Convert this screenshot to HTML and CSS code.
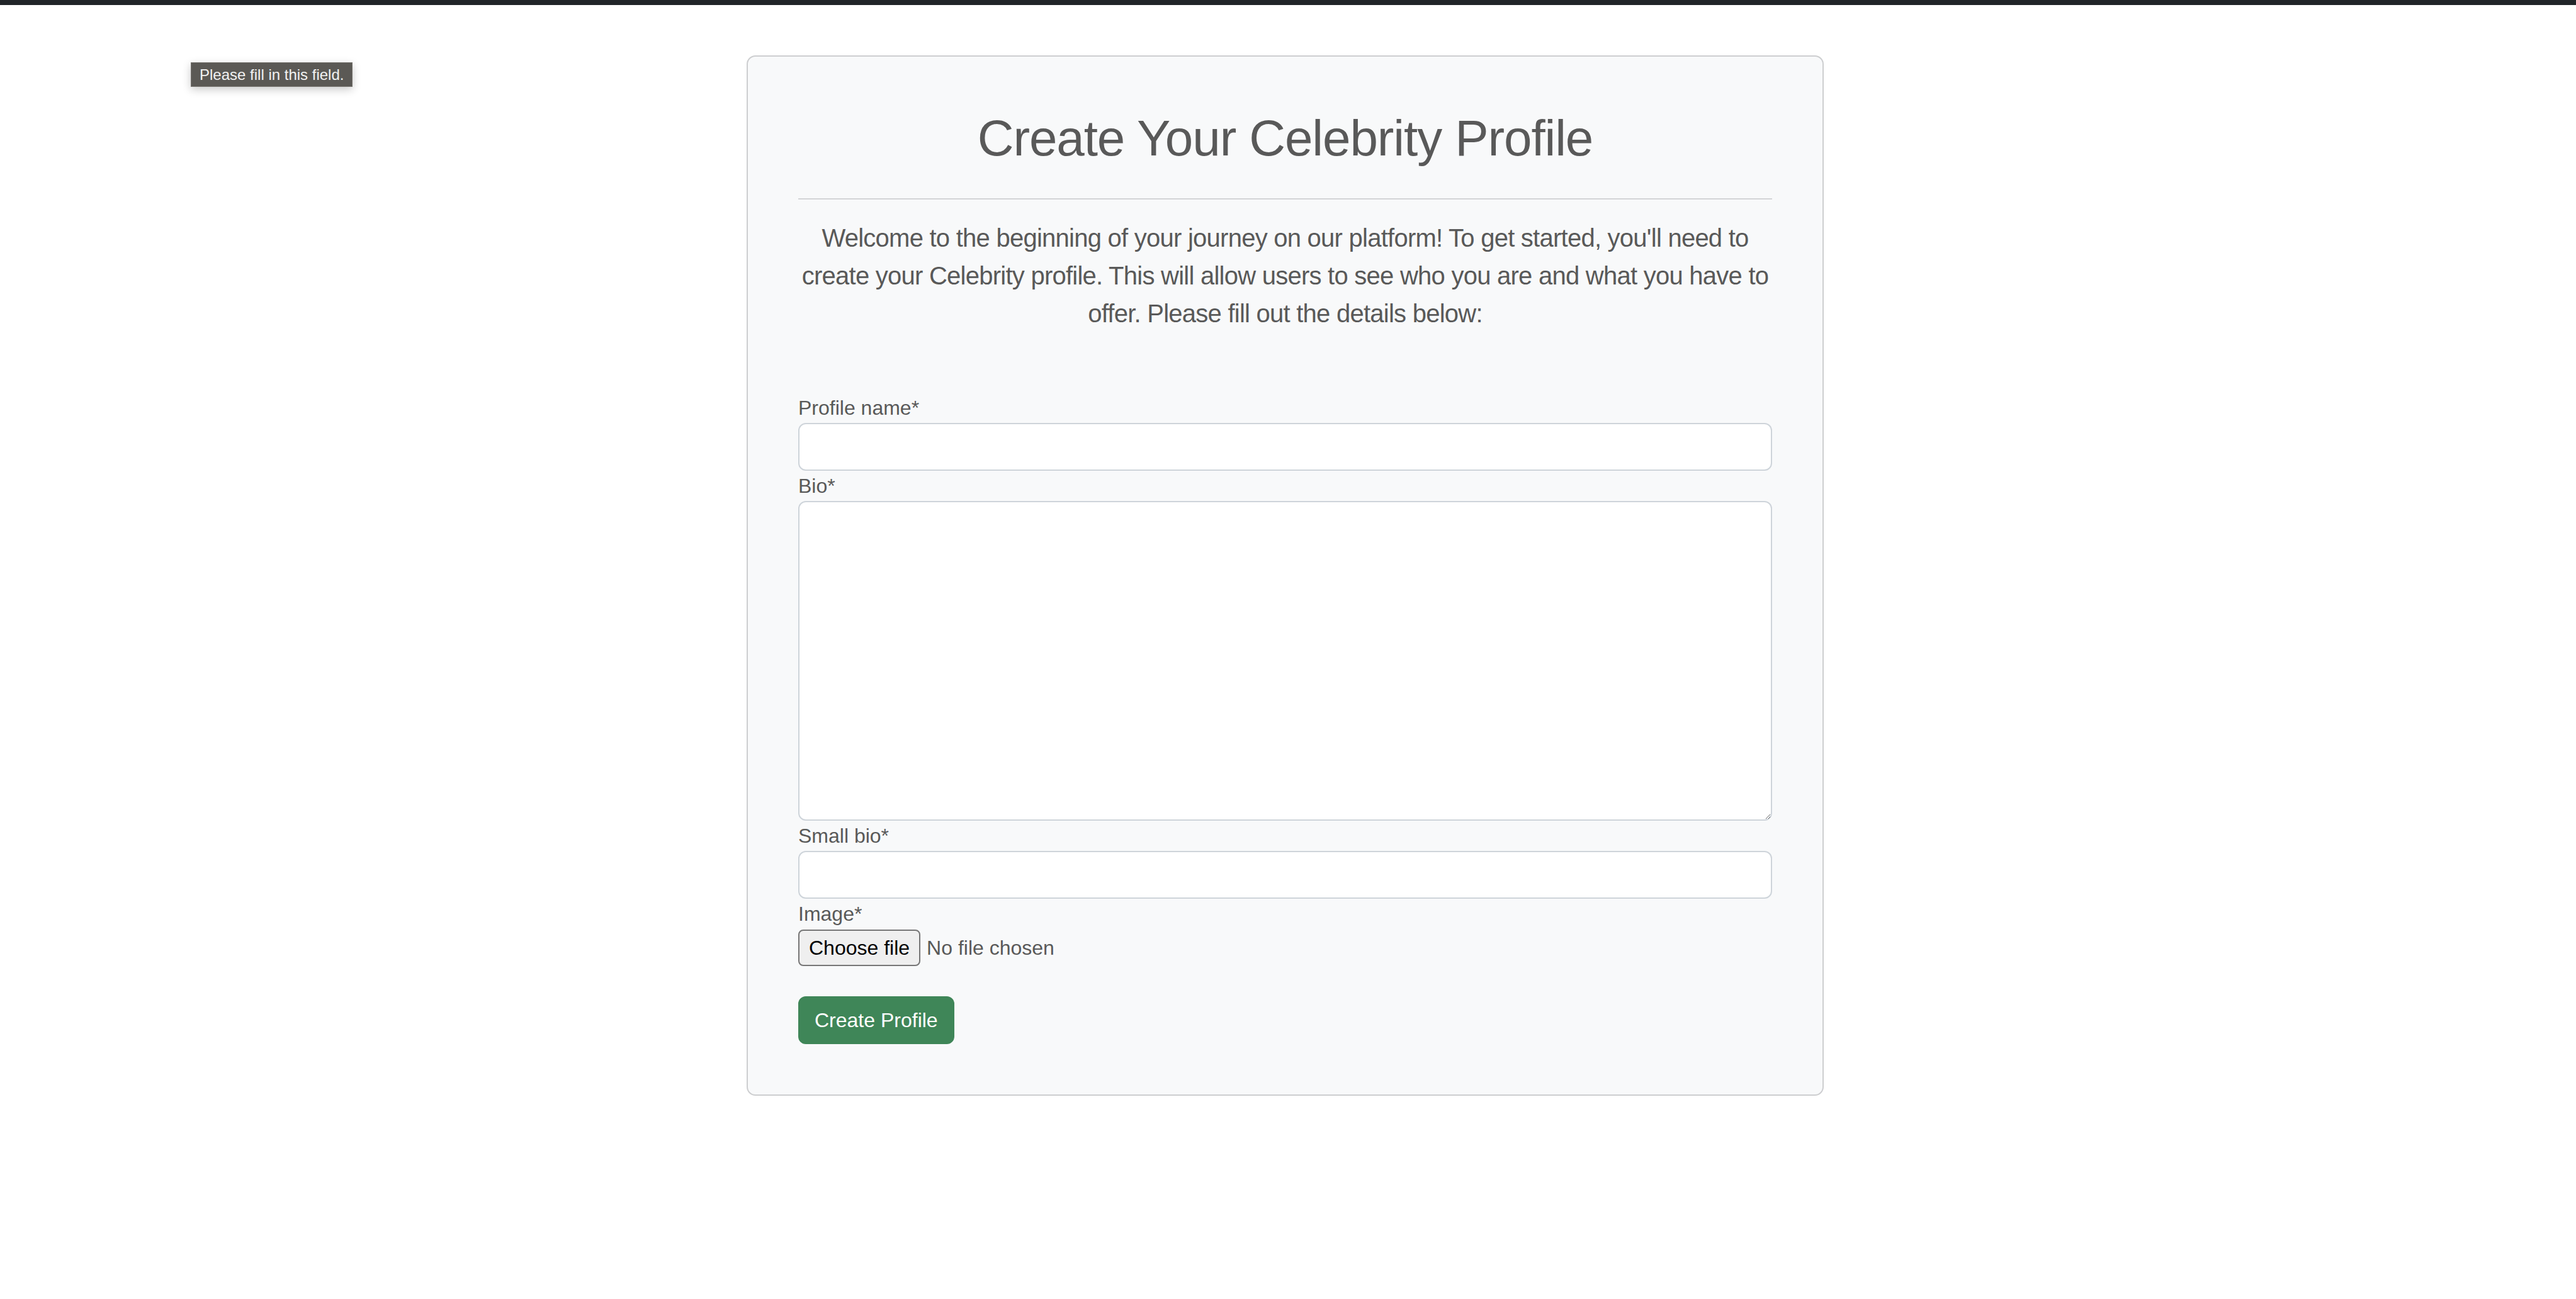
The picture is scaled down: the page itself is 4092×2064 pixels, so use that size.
FILE: index.html
```html
<!DOCTYPE html>
<html lang="en">
<head>
<meta charset="utf-8">
<title>Create Your Celebrity Profile</title>
<link rel="stylesheet" href="styles.css">
</head>
<body>
<div class="topbar"></div>
<div class="tooltip">Please fill in this field.</div>
<main class="page">
  <section class="card">
    <h1 class="title">Create Your Celebrity Profile</h1>
    <hr class="divider">
    <p class="lead">Welcome to the beginning of your journey on our platform! To get started, you'll need to create your Celebrity profile. This will allow users to see who you are and what you have to offer. Please fill out the details below:</p>
    <form class="form">
      <label class="label" for="name">Profile name*</label>
      <input class="control" id="name" type="text" required>
      <label class="label" for="bio">Bio*</label>
      <textarea class="control area" id="bio" rows="10" required></textarea>
      <label class="label" for="small">Small bio*</label>
      <input class="control" id="small" type="text" required>
      <label class="label" for="image">Image*</label>
      <label class="file">
        <input class="file-input" id="image" type="file" required>
        <span class="file-btn">Choose file</span>
        <span class="file-name">No file chosen</span>
      </label>
      <button class="submit" type="button">Create Profile</button>
    </form>
  </section>
</main>
</body>
</html>
```
FILE: styles.css
```css
html, body {
  margin: 0;
  padding: 0;
  background: #ffffff;
}
body {
  font-family: "Liberation Sans", Arial, sans-serif;
  color: #595959;
  font-size: 32px;
  line-height: 48px;
}
.topbar {
  height: 8px;
  background: #212529;
}
.tooltip {
  position: absolute;
  left: 303px;
  top: 99px;
  box-sizing: border-box;
  height: 39px;
  padding: 0 13px;
  background: #5b5955;
  border: 1px solid #77746f;
  color: #f2f2f2;
  font-size: 24px;
  line-height: 37px;
  white-space: nowrap;
  box-shadow: 0 4px 14px rgba(0, 0, 0, 0.22);
}
.page {
  display: flex;
  justify-content: center;
  padding: 80px 9px 0 0;
}
.card {
  box-sizing: border-box;
  width: 1711px;
  border: 2px solid #cdced0;
  border-radius: 14px;
  background: #f8f9fa;
  padding: 82px 80px 80px;
}
.title {
  margin: 0;
  text-align: center;
  font-size: 80px;
  line-height: 96px;
  font-weight: 500;
  letter-spacing: -1.1px;
  color: #595959;
}
.divider {
  margin: 47px 0 31px;
  border: 0;
  border-top: 2px solid #d3d4d6;
  height: 0;
}
.lead {
  margin: 0 0 96px;
  text-align: center;
  font-size: 40px;
  line-height: 60px;
  letter-spacing: -0.75px;
  color: #595959;
}
.form {
  display: flex;
  flex-direction: column;
  align-items: flex-start;
}
.label {
  display: block;
  font-size: 32px;
  line-height: 48px;
}
.control {
  display: block;
  box-sizing: border-box;
  width: 100%;
  height: 76px;
  margin: 0;
  padding: 12px 24px;
  background: #ffffff;
  border: 2px solid #ced4da;
  border-radius: 12px;
  font: inherit;
  color: #212529;
}
.area {
  height: 508px;
  resize: vertical;
}
.file {
  display: flex;
  align-items: center;
  gap: 10px;
  margin: 1px 0 48px;
  cursor: pointer;
}
.file-input {
  display: none;
}
.file-btn {
  box-sizing: border-box;
  height: 58px;
  padding: 0 15px;
  border: 2px solid #767676;
  border-radius: 8px;
  background: #efefef;
  color: #000000;
  font-size: 32px;
  line-height: 54px;
}
.file-name {
  font-size: 32px;
  line-height: 48px;
  color: #595959;
}
.submit {
  box-sizing: border-box;
  height: 76px;
  padding: 0 24px;
  border: 2px solid #3f8658;
  border-radius: 12px;
  background: #3f8658;
  color: #ffffff;
  font-family: "Liberation Sans", Arial, sans-serif;
  font-size: 32px;
  line-height: 48px;
  cursor: pointer;
}
```
